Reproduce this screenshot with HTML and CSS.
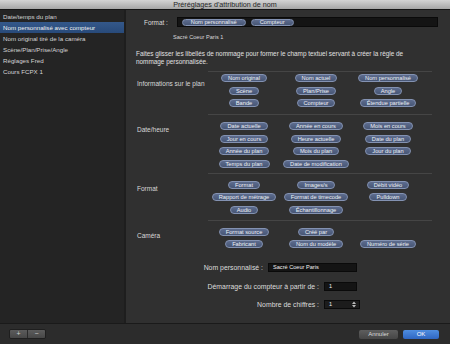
FILE: index.html
```html
<!DOCTYPE html>
<html lang="fr">
<head>
	<meta charset="UTF-8">
	<title>Préréglages d'attribution de nom</title>
	<link rel="stylesheet" href="styles.css">
</head>
<body>
	<div class="window">
		<div class="titlebar">Préréglages d'attribution de nom</div>

		<div class="main">
			<div class="sidebar">
				<div class="item">Date/temps du plan</div>
				<div class="item selected">Nom personnalisé avec compteur</div>
				<div class="item">Nom original tiré de la caméra</div>
				<div class="item">Scène/Plan/Prise/Angle</div>
				<div class="item">Réglages Fred</div>
				<div class="item">Cours FCPX 1</div>
			</div>

			<div class="panel">
				<div class="format-row">
					<span class="format-label">Format :</span>
					<div class="format-field">
						<span class="token">Nom personnalisé</span>
						<span class="token">Compteur</span>
					</div>
				</div>
				<div class="preview">Sacré Coeur Paris 1</div>
				<p class="hint">Faites glisser les libellés de nommage pour former le champ textuel servant à créer la règle de<br>nommage personnalisée.</p>

				<div class="section first">
					<div class="section-label">Informations sur le plan</div>
					<div class="tokens">
						<span class="token">Nom original</span>
						<span class="token">Nom actuel</span>
						<span class="token">Nom personnalisé</span>
						<span class="token">Scène</span>
						<span class="token">Plan/Prise</span>
						<span class="token">Angle</span>
						<span class="token">Bande</span>
						<span class="token">Compteur</span>
						<span class="token">Étendue partielle</span>
					</div>
				</div>

				<div class="section tight">
					<div class="section-label">Date/heure</div>
					<div class="tokens">
						<span class="token">Date actuelle</span>
						<span class="token">Année en cours</span>
						<span class="token">Mois en cours</span>
						<span class="token">Jour en cours</span>
						<span class="token">Heure actuelle</span>
						<span class="token">Date du plan</span>
						<span class="token">Année du plan</span>
						<span class="token">Mois du plan</span>
						<span class="token">Jour du plan</span>
						<span class="token">Temps du plan</span>
						<span class="token">Date de modification</span>
						<span></span>
					</div>
				</div>

				<div class="section">
					<div class="section-label">Format</div>
					<div class="tokens">
						<span class="token">Format</span>
						<span class="token">Images/s</span>
						<span class="token">Débit vidéo</span>
						<span class="token">Rapport de métrage</span>
						<span class="token">Format de timecode</span>
						<span class="token">Pulldown</span>
						<span class="token">Audio</span>
						<span class="token">Échantillonnage</span>
						<span></span>
					</div>
				</div>

				<div class="section">
					<div class="section-label">Caméra</div>
					<div class="tokens">
						<span class="token">Format source</span>
						<span class="token">Créé par</span>
						<span></span>
						<span class="token">Fabricant</span>
						<span class="token">Nom du modèle</span>
						<span class="token">Numéro de série</span>
					</div>
				</div>

				<div class="form">
					<div class="form-row">
						<span class="form-label">Nom personnalisé :</span>
						<div class="field wide">Sacré Coeur Paris</div>
					</div>
					<div class="form-row">
						<span class="form-label">Démarrage du compteur à partir de :</span>
						<div class="field small">1</div>
					</div>
					<div class="form-row">
						<span class="form-label">Nombre de chiffres :</span>
						<div class="field popup">
							<span>1</span>
							<svg width="4" height="7" viewBox="0 0 4 7">
								<path d="M0 3 L2 0.5 L4 3 Z M0 4 L2 6.5 L4 4 Z" fill="#bbb"/>
							</svg>
						</div>
					</div>
				</div>
			</div>
		</div>

		<div class="footer">
			<div class="segmented">
				<span class="seg">+</span>
				<span class="seg">−</span>
			</div>
			<div class="buttons">
				<span class="button">Annuler</span>
				<span class="button default">OK</span>
			</div>
		</div>
	</div>
</body>
</html>
```

FILE: styles.css
```css
body {
	margin: 0;
	background: #2e2e2e;
	font-family: "Liberation Sans", Arial, sans-serif;
	color: #dcdcdc;
}

.window {
	width: 450px;
	height: 344px;
	display: flex;
	flex-direction: column;
	overflow: hidden;
}

.titlebar {
	height: 9px;
	line-height: 9px;
	border-bottom: 1px solid #161616;
	background: linear-gradient(#d4d4d4, #a6a6a6);
	color: #262626;
	font-size: 7.2px;
	text-align: center;
}

.main {
	height: 313px;
	display: flex;
}

/* left list of presets */
.sidebar {
	width: 124px;
	border-right: 2px solid #1e1e1e;
	background: #242424;
	padding-top: 1px;
}

.item {
	height: 11px;
	line-height: 11px;
	padding-left: 3px;
	font-size: 6.2px;
	color: #d4d4d4;
	white-space: nowrap;
}

.item.selected {
	background: linear-gradient(#34588a, #284a7a);
	color: #f2f2f2;
}

.panel {
	flex: 1;
	background: #303030;
	padding: 7px 12px 0 0;
}

.format-row {
	display: flex;
	align-items: center;
	padding-left: 18px;
}

.format-label {
	font-size: 6.4px;
	margin-right: 9px;
}

.format-field {
	flex: 1;
	height: 10px;
	background: #141414;
	border: 1px solid #0a0a0a;
	box-sizing: border-box;
	display: flex;
	align-items: center;
	gap: 5px;
	padding-left: 4px;
}

.format-field .token {
	height: 7px;
	line-height: 5px;
	padding: 0 8px;
}

.preview {
	margin-top: 6px;
	padding-left: 47px;
	line-height: 8px;
	font-size: 5.6px;
	color: #d8d8d8;
}

.hint {
	margin: 9px 0 0;
	padding-left: 10px;
	line-height: 8px;
	font-size: 6.4px;
	color: #e0e0e0;
	white-space: nowrap;
}

/* token groups */
.section {
	display: flex;
	padding-left: 11px;
}

.section-label {
	width: 71px;
	margin-top: 12px;
	line-height: 8px;
	font-size: 6.5px;
	color: #d8d8d8;
	white-space: nowrap;
}

.tokens {
	width: 224px;
	border-top: 1px solid #454545;
	padding: 7px 0 6px;
	display: grid;
	grid-template-columns: repeat(3, 72px);
	grid-auto-rows: 8px;
	row-gap: 4.5px;
	justify-items: center;
}

.section.first {
	margin-top: 5px;
}

.section.first .section-label {
	margin-top: 9px;
}

.section.first .tokens {
	padding-top: 2px;
	padding-bottom: 7px;
}

.section.tight .tokens {
	padding-bottom: 5px;
}

.token {
	height: 8px;
	line-height: 6px;
	box-sizing: border-box;
	padding: 0 6px;
	border: 1px solid #8392b2;
	border-radius: 5px;
	background: linear-gradient(#5d6c8e, #475675);
	color: #eef0f6;
	font-size: 5.7px;
	white-space: nowrap;
}

/* bottom fields */
.form {
	margin-top: 9px;
	display: flex;
	flex-direction: column;
	gap: 9.5px;
	padding-right: 81px;
}

.form-row {
	display: flex;
	justify-content: flex-end;
	align-items: center;
	height: 9px;
	gap: 5px;
}

.form-label {
	font-size: 6.9px;
	color: #dcdcdc;
}

.field {
	height: 9px;
	line-height: 7px;
	box-sizing: border-box;
	background: #141414;
	border: 1px solid #0a0a0a;
	font-size: 5.6px;
	color: #f0f0f0;
	padding-left: 4px;
}

.field.wide {
	width: 89px;
}

.field.small {
	width: 33px;
}

.field.popup {
	width: 36px;
	margin-right: -3px;
	display: flex;
	justify-content: space-between;
	align-items: center;
	padding-right: 3px;
	background: #1c1c1c;
}

.footer {
	flex: 1;
	border-top: 1px solid #1a1a1a;
	background: #2c2c2c;
	display: flex;
	justify-content: space-between;
	align-items: center;
	padding: 0 11px 0 9px;
}

.segmented {
	display: flex;
	border: 1px solid #1f1f1f;
	border-radius: 2px;
	overflow: hidden;
}

.seg {
	width: 17px;
	height: 8px;
	line-height: 8px;
	text-align: center;
	background: linear-gradient(#5c5c5c, #474747);
	color: #cfcfcf;
	font-size: 7px;
}

.seg + .seg {
	border-left: 1px solid #2a2a2a;
}

.buttons {
	display: flex;
	gap: 5px;
}

.button {
	width: 39px;
	height: 9px;
	line-height: 9px;
	text-align: center;
	border-radius: 2px;
	background: linear-gradient(#5e5e5e, #464646);
	color: #dadada;
	font-size: 6px;
}

.button.default {
	width: 36px;
	background: linear-gradient(#4f8ee0, #2f66c2);
	color: #ffffff;
}
```
